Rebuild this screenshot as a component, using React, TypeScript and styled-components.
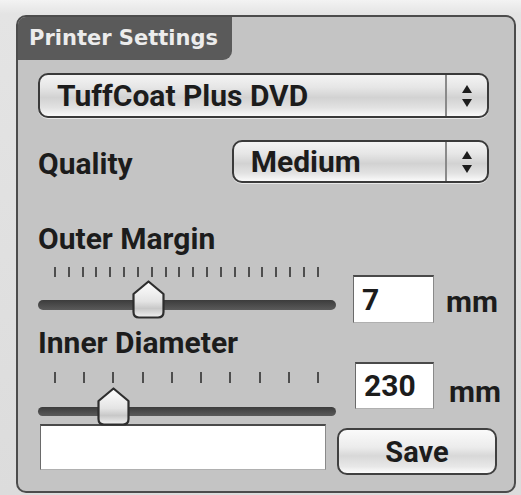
import React from "react";
import styled, { createGlobalStyle } from "styled-components";

const Global = createGlobalStyle`
  html, body { margin: 0; padding: 0; background: #e2e2e2; }
  body { font-family: Roboto, "Liberation Sans", Arial, sans-serif; }
  * { box-sizing: border-box; }
`;

const Page = styled.div`
  width: 521px;
  height: 495px;
  padding: 15px 0 0 16px;
  background: linear-gradient(180deg, #f3f3f3 0px, #e4e4e4 14px, #dcdcdc 100%);
`;

const Panel = styled.section`
  width: 500px;
  height: 478px;
  border: 2px solid #4c4c4c;
  border-radius: 10px;
  background: #c4c4c4;
  overflow: hidden;
  display: flex;
  flex-direction: column;
`;

const Tab = styled.div`
  width: 214px;
  height: 43px;
  background: #5a5a5a;
  border-bottom-right-radius: 9px;
  color: #ececec;
  font-family: "DejaVu Sans", Verdana, sans-serif;
  font-weight: 700;
  font-size: 21px;
  line-height: 43px;
  padding-left: 11px;
  white-space: nowrap;
`;

const Body = styled.div`
  display: flex;
  flex-direction: column;
  padding: 0 15px 0 20px;
  color: #1c1c1c;
  font-weight: 700;
  font-size: 30px;
`;

const Row = styled.div<{ $mt: number; $h?: number }>`
  display: flex;
  align-items: flex-start;
  margin-top: ${(p) => p.$mt}px;
  ${(p) => (p.$h ? `height: ${p.$h}px;` : "")}
`;

const Label = styled.div<{ $mt?: number }>`
  height: 30px;
  line-height: 30px;
  margin-top: ${(p) => p.$mt ?? 0}px;
  white-space: nowrap;
`;

const Popup = styled.div<{ $w: number; $h: number; $ml?: number }>`
  width: ${(p) => p.$w}px;
  height: ${(p) => p.$h}px;
  margin-left: ${(p) => p.$ml ?? 0}px;
  border: 2px solid #3a3a3a;
  border-radius: 10px;
  background: linear-gradient(
    180deg,
    #f4f4f4 0%,
    #e6e6e6 30%,
    #d2d2d2 55%,
    #e2e2e2 80%,
    #fafafa 100%
  );
  box-shadow: 0 1px 0 #e8e8e8;
  display: flex;
  align-items: center;
  overflow: hidden;
`;

const PopupText = styled.div`
  flex: 1;
  padding-left: 17px;
  line-height: 30px;
  white-space: nowrap;
`;

const Arrows = styled.div`
  width: 42px;
  height: 100%;
  border-left: 2px solid #8a8a8a;
  display: flex;
  flex-direction: column;
  align-items: center;
  justify-content: center;
  gap: 6px;
`;

const Tri = styled.div<{ $down?: boolean }>`
  width: 0;
  height: 0;
  border-left: 5px solid transparent;
  border-right: 5px solid transparent;
  ${(p) =>
    p.$down
      ? "border-top: 8px solid #1c1c1c;"
      : "border-bottom: 8px solid #1c1c1c;"}
`;

const SliderBox = styled.div<{ $h: number; $mt: number }>`
  position: relative;
  width: 298px;
  height: ${(p) => p.$h}px;
  margin-top: ${(p) => p.$mt}px;
  flex: none;
`;

const Ticks = styled.div<{ $top: number; $len: number }>`
  position: absolute;
  left: 16px;
  right: 17px;
  top: ${(p) => p.$top}px;
  height: ${(p) => p.$len}px;
  display: flex;
  justify-content: space-between;
`;

const Tick = styled.span`
  width: 2px;
  height: 100%;
  background: #4e4e4e;
`;

const Track = styled.div<{ $top: number; $th: number }>`
  position: absolute;
  left: 0;
  right: 0;
  top: ${(p) => p.$top}px;
  height: ${(p) => p.$th}px;
  border-radius: 5px;
  background: linear-gradient(180deg, #3c3c3c, #5a5a5a);
`;

const Thumb = styled.svg<{ $top: number }>`
  position: absolute;
  top: ${(p) => p.$top}px;
  width: 35px;
  height: 39px;
`;

const Field = styled.div<{ $w: number; $h: number; $mt?: number; $ml?: number }>`
  width: ${(p) => p.$w}px;
  height: ${(p) => p.$h}px;
  margin-top: ${(p) => p.$mt ?? 0}px;
  margin-left: ${(p) => p.$ml ?? 0}px;
  background: #fff;
  border-top: 2px solid #4a4a4a;
  border-left: 1px solid #6a6a6a;
  border-right: 1px solid #8a8a8a;
  border-bottom: 1px solid #b0b0b0;
  padding-left: 8px;
  line-height: ${(p) => p.$h - 3}px;
  flex: none;
`;

const Unit = styled.div<{ $mt: number; $ml: number }>`
  margin-top: ${(p) => p.$mt}px;
  margin-left: ${(p) => p.$ml}px;
  line-height: 30px;
  height: 30px;
`;

const SaveButton = styled.button`
  width: 160px;
  height: 47px;
  margin-top: 4px;
  margin-left: 11px;
  border: 2px solid #404040;
  border-radius: 10px;
  background: linear-gradient(
    180deg,
    #fafafa 0%,
    #ececec 40%,
    #d8d8d8 60%,
    #e8e8e8 85%,
    #fdfdfd 100%
  );
  font-family: inherit;
  font-weight: 700;
  font-size: 29px;
  color: #1c1c1c;
  padding: 0;
  line-height: 40px;
`;

type SliderProps = {
  ticks: number;
  frac: number;
  h: number;
  mt: number;
  tickTop: number;
  tickLen: number;
  trackTop: number;
  trackH: number;
  thumbTop: number;
};

function Slider(p: SliderProps) {
  const span = 298 - 16 - 17 - 2;
  const center = 16 + 1 + p.frac * span;
  return (
    <SliderBox $h={p.h} $mt={p.mt}>
      <Ticks $top={p.tickTop} $len={p.tickLen}>
        {Array.from({ length: p.ticks }).map((_, i) => (
          <Tick key={i} />
        ))}
      </Ticks>
      <Track $top={p.trackTop} $th={p.trackH} />
      <Thumb $top={p.thumbTop} style={{ left: center - 17.5 }} viewBox="0 0 35 39">
        <defs>
          <linearGradient id="tg" x1="0" y1="0" x2="0" y2="1">
            <stop offset="0" stopColor="#ffffff" />
            <stop offset="0.55" stopColor="#e4e4e4" />
            <stop offset="0.75" stopColor="#c8c8c8" />
            <stop offset="1" stopColor="#f2f2f2" />
          </linearGradient>
        </defs>
        <path
          d="M17.5 1.5 L32.5 14 L32.5 32 Q32.5 37.5 27 37.5 L8 37.5 Q2.5 37.5 2.5 32 L2.5 14 Z"
          fill="url(#tg)"
          stroke="#2e2e2e"
          strokeWidth="2.2"
          strokeLinejoin="round"
        />
      </Thumb>
    </SliderBox>
  );
}

function Stepper() {
  return (
    <Arrows>
      <Tri />
      <Tri $down />
    </Arrows>
  );
}

export default function App() {
  return (
    <>
      <Global />
      <Page>
        <Panel>
          <Tab>Printer Settings</Tab>
          <Body>
            <Row $mt={13}>
              <Popup $w={451} $h={45}>
                <PopupText>TuffCoat Plus DVD</PopupText>
                <Stepper />
              </Popup>
            </Row>
            <Row $mt={22}>
              <Label $mt={9}>Quality</Label>
              <Popup $w={257} $h={43} $ml={99}>
                <PopupText>Medium</PopupText>
                <Stepper />
              </Popup>
            </Row>
            <Label $mt={41}>Outer Margin</Label>
            <Row $mt={8}>
              <Slider
                ticks={20}
                frac={0.354}
                h={60}
                mt={0}
                tickTop={5}
                tickLen={10}
                trackTop={38}
                trackH={10}
                thumbTop={18}
              />
              <Field $w={81} $h={48} $mt={13} $ml={17}>
                7
              </Field>
              <Unit $mt={25} $ml={12}>
                mm
              </Unit>
            </Row>
            <Label $mt={5}>Inner Diameter</Label>
            <Row $mt={4}>
              <Slider
                ticks={10}
                frac={0.222}
                h={58}
                mt={5}
                tickTop={5}
                tickLen={11}
                trackTop={40}
                trackH={9}
                thumbTop={20}
              />
              <Field $w={79} $h={47} $ml={19}>
                230
              </Field>
              <Unit $mt={15} $ml={15}>
                mm
              </Unit>
            </Row>
            <Row $mt={-1}>
              <Field $w={286} $h={46} $ml={2} />
              <SaveButton>Save</SaveButton>
            </Row>
          </Body>
        </Panel>
      </Page>
    </>
  );
}
